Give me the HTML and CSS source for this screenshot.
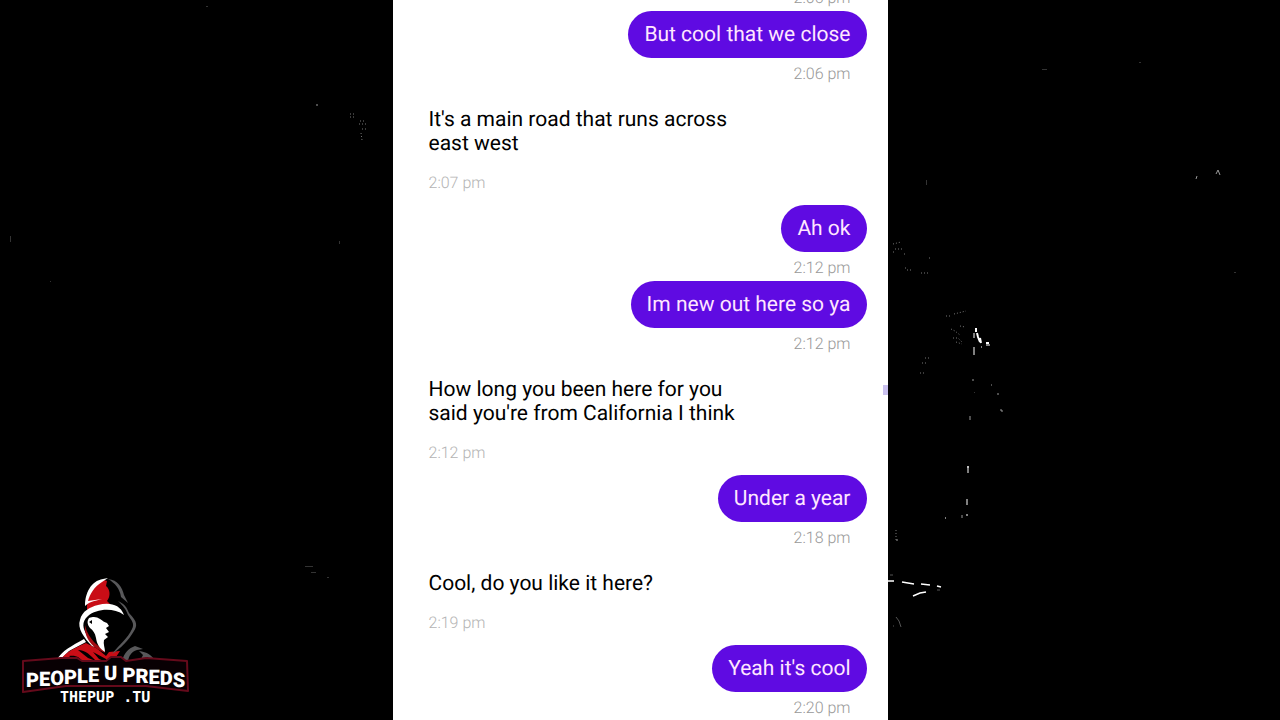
FILE: index.html
```html
<!DOCTYPE html>
<html lang="en">

<head>
    <meta charset="UTF-8">
    <meta name="viewport" content="width=device-width, initial-scale=1.0">
    <title>Chat</title>
    <link rel="stylesheet" href="styles.css">
</head>

<body>
    <!-- dust and light specks behind the chat -->
    <svg class="specks" viewBox="0 0 1280 720" preserveAspectRatio="xMidYMid slice" aria-hidden="true">
        <g fill="none" stroke="#fff">
            <path stroke-width="2" d="M976 328v4M977 333l1 4 2 5M980 338l1 5M986 343h3"/>
            <path d="M974 333v5M974 347v8M981 347h1M986 345h4M967 467h2M968 466v7M967 499v6M967 514v2M945 518h1"/>
            <path stroke-width="1.5" d="M888 581h6M902 582l12 2M921 584l9 1M913 596l7-3 6-1M937 586l4 1"/>
            <path stroke="#999" d="M1216 174l2-4 2 5M972 380h2M1000 410h2v2M991 385h1M998 393v2M970 416v4M896 540h2M962 515v3M317 104v2M1197 176l-1 3"/>
            <path stroke="#555" d="M896 617l3 4 2 6M893 626h1M890 575h3M937 590h3"/>
        </g>
        <g fill="none" stroke="#777" stroke-dasharray="1 2">
            <path d="M893 244l8-2M895 249h7M893 252h3M904 254h3M929 258h3M907 270h5M905 268h3M921 273h7M946 316h5M954 314l12-3M960 326l5 1M951 329l4 2 5 4M953 338l5 0 4 4M956 342l6 2M925 358h4M922 363h6M920 373h5M896 530v10"/>
            <path d="M350 114h6M350 117h4M360 121h6M359 124h7M362 129h4M361 133l1 7"/>
        </g>
        <g fill="#333">
            <path d="M10 236h1v6h-1zM50 281h1v1h-1zM206 6h2v1h-2zM1042 69h5v1h-5zM1139 62h2v1h-2zM1234 272h2v1h-2zM339 241h1v3h-1zM305 566h8v1h-8zM311 572h5v1h-5zM327 577h2v1h-2zM926 180h1v5h-1zM974 392h1v1h-1z"/>
        </g>
    </svg>

    <main class="chat">
        <div class="message sent">
            <time>2:06 pm</time>
        </div>
        <div class="message sent">
            <p>But cool that we close</p>
            <time>2:06 pm</time>
        </div>
        <div class="message received">
            <p>It's a main road that runs across east west</p>
            <time>2:07 pm</time>
        </div>
        <div class="message sent">
            <p>Ah ok</p>
            <time>2:12 pm</time>
        </div>
        <div class="message sent">
            <p>Im new out here so ya</p>
            <time>2:12 pm</time>
        </div>
        <div class="message received">
            <p>How long you been here for you said you're from California I think</p>
            <time>2:12 pm</time>
        </div>
        <div class="message sent">
            <p>Under a year</p>
            <time>2:18 pm</time>
        </div>
        <div class="message received">
            <p>Cool, do you like it here?</p>
            <time>2:19 pm</time>
        </div>
        <div class="message sent">
            <p>Yeah it's cool</p>
            <time>2:20 pm</time>
        </div>
        <span class="scroll-mark"></span>
    </main>

    <svg class="watermark" width="180" height="135" viewBox="15 575 180 135" role="img" aria-label="People U Preds">
        <!-- shoulders -->
        <path fill="#fff" d="M56 661C62 650 72 646 84 639l2 3-17 9-9 9z"/>
        <path fill="#c90d16" d="M60 660c7-9 15-12 26-17 5 3 10 4 14 8l6 5 3-4 11-1-8 12H60z"/>
        <path fill="#000" d="M69 656c8-1 11 2 14 6l-8-1zM78 650c8 0 12 5 18 11l-8-3zM93 652l13 7 3 4-10-4z"/>
        <path fill="#58585a" d="M122 661c2-8 7-13 13-15l8 3-6 1c-6 2-8 6-9 11zM139 651c8 1 13 4 17 11l-9-5-7 4 3-6z"/>
        <!-- hood -->
        <path fill="#c90d16" d="M87 606c1-13 8-23 17-26l3 1-1 5c4 3 5 10 1 15l4 4c-8-1-16 0-24 5z"/>
        <path fill="#fff" d="M85 606c0-13 6-25 18-27l5-1-6 4c-8 5-12 12-14 19l14-2c-8 2-13 3-17 7z"/>
        <path fill="#58585a" d="M108 579c10 1 14 8 16 16l4 8-7-6c-1-8-6-14-13-18z"/>
        <path fill="#fff" d="M124 615c-11-8-28-6-36 1-7 6-5 13-1 19l8 12-3-1c-8-8-15-18-12-26 2-9 10-13 18-15 11-3 22-1 26 10z"/>
        <path fill="#58585a" d="M118 601c7 3 9 7 11 12 9 9 8 13 5 18-5 9-14 18-22 23 7-9 16-16 20-25 3-6-1-9-4-14-2-6-5-9-10-14z"/>
        <!-- face -->
        <path fill="#a10b12" d="M85 625c2 9 6 13 9 17 4 4 8 6 11 11l-8-4c-8-6-13-14-12-24z"/>
        <path fill="#fff" d="M89 618c5-2 8-1 11 1 3 2 4 3 7 4l2 3-3 2 3 4-4 2 3 3-4 3c-1 4 1 8 1 12-6-4-8-8-9-14-1-5-3-8-6-10-3-4-3-7-1-10z"/>
        <path fill="#000" d="M89 622l3-2v4z"/>
        <!-- name plate -->
        <path fill="#080003" stroke="#650a1b" stroke-width="2" stroke-linejoin="round" d="M23 661l38-3h16l5 3h24l5-4h10l5 4 20-3 41 3 1 30-42-5H66l-43 6z"/>
        <text class="brand" y="687 686 685 684 683 682 680 680 680 682 683 684 685 687" x="26">PEOPLE U PREDS</text>
        <text class="site" x="60" y="702">THEPUP .TU</text>
    </svg>
</body>

</html>
```
FILE: styles.css
```css
* {
    box-sizing: border-box;
}

body {
    margin: 0;
    height: 100vh;
    overflow: hidden;
    background-color: #000;
    font-family: Roboto, sans-serif;
    text-rendering: geometricPrecision;
}

.specks {
    position: absolute;
    width: 100%;
    height: 100%;
}

.chat {
    position: relative;
    display: flex;
    flex-direction: column;
    justify-content: flex-end;
    width: 100%;
    max-width: 495px;
    height: calc(100% + 1px);
    margin: 0 auto;
    padding: 0 21px 0 36px;
    background-color: #fff;
}

.message {
    display: flex;
    flex-direction: column;
    flex-shrink: 0;
}

.message p {
    margin: 0;
    font-size: 21px;
    line-height: 24px;
}

.message time {
    font-size: 16px;
    line-height: 20px;
    font-weight: 300;
}

.sent {
    align-items: flex-end;
}

.sent p {
    padding: 12px 16px 11px;
    border-radius: 24px;
    background-color: #5f0be2;
    color: #ffe6ff;
}

.sent time {
    padding: 6px 16px 3px;
    color: #999;
}

.received {
    padding: 21px 0 12px;
}

.received p {
    max-width: 320px;
    color: #000;
}

.received time {
    padding-top: 17px;
    color: #b4b4b4;
}

.scroll-mark {
    position: absolute;
    top: 385px;
    right: 0;
    width: 5px;
    height: 10px;
    background-color: #c9c0ee;
}

.watermark {
    position: absolute;
    left: 15px;
    bottom: 10px;
}

.watermark text {
    fill: #fff;
}

.brand {
    font-family: Roboto, sans-serif;
    font-size: 20px;
    font-weight: 900;
}

.site {
    font-family: "DejaVu Sans Mono", monospace;
    font-size: 15px;
    font-weight: 700;
}
```
